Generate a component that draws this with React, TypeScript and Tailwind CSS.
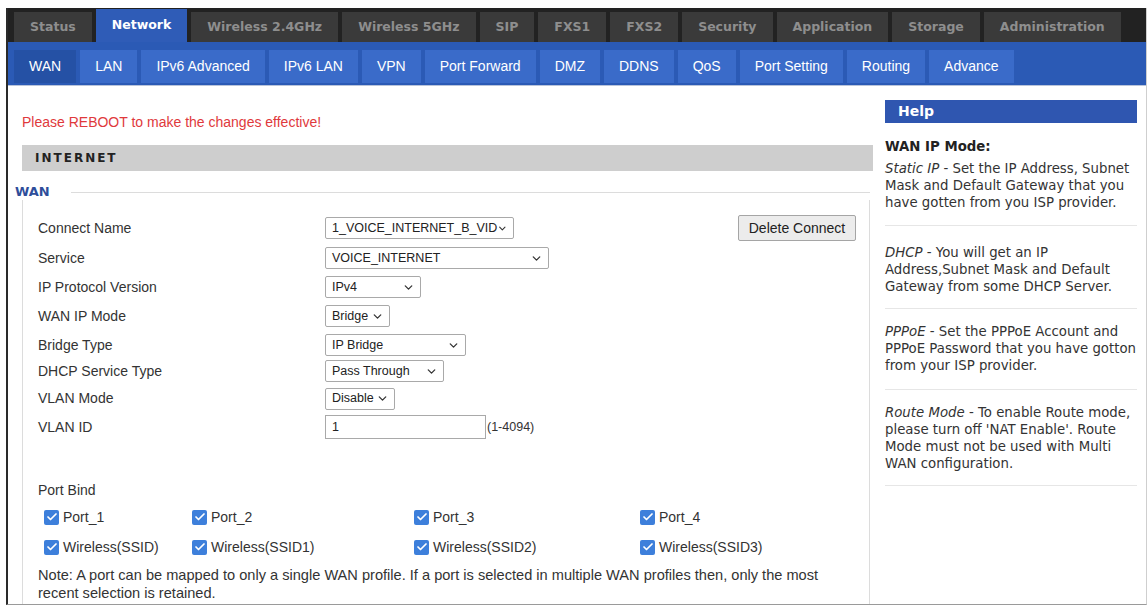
import { ChevronDown, Check } from 'lucide-react'

const topTabs = [
  'Status',
  'Network',
  'Wireless 2.4GHz',
  'Wireless 5GHz',
  'SIP',
  'FXS1',
  'FXS2',
  'Security',
  'Application',
  'Storage',
  'Administration',
]

const subTabs = [
  'WAN',
  'LAN',
  'IPv6 Advanced',
  'IPv6 LAN',
  'VPN',
  'Port Forward',
  'DMZ',
  'DDNS',
  'QoS',
  'Port Setting',
  'Routing',
  'Advance',
]

function Select({ value, className }: { value: string; className: string }) {
  return (
    <div
      className={`flex h-[22px] items-center justify-between rounded-[2px] border border-[#a9a9a9] bg-white pl-[6px] pr-[5px] text-[12.5px] text-[#222] ${className}`}
    >
      <span className="whitespace-nowrap">{value}</span>
      <ChevronDown size={13} strokeWidth={2.4} className="text-[#333]" />
    </div>
  )
}

function Checkbox({ label }: { label: string }) {
  return (
    <div className="flex items-center gap-[4px]">
      <span className="flex h-[15px] w-[15px] items-center justify-center rounded-[2px] bg-[#3d7fdb]">
        <Check size={12} strokeWidth={3.5} className="text-white" />
      </span>
      <span>{label}</span>
    </div>
  )
}

const rows = [
  { label: 'Connect Name', h: 'h-[30px]', field: <Select value="1_VOICE_INTERNET_B_VID" className="w-[189px]" /> },
  { label: 'Service', h: 'h-[30px]', field: <Select value="VOICE_INTERNET" className="w-[224px]" /> },
  { label: 'IP Protocol Version', h: 'h-[28px]', field: <Select value="IPv4" className="w-[96px]" /> },
  { label: 'WAN IP Mode', h: 'h-[30px]', field: <Select value="Bridge" className="w-[65px]" /> },
  { label: 'Bridge Type', h: 'h-[28px]', field: <Select value="IP Bridge" className="w-[141px]" /> },
  { label: 'DHCP Service Type', h: 'h-[24px]', field: <Select value="Pass Through" className="w-[119px]" /> },
  { label: 'VLAN Mode', h: 'h-[31px]', field: <Select value="Disable" className="w-[70px]" /> },
  {
    label: 'VLAN ID',
    h: 'h-[26px]',
    field: (
      <div className="flex items-center">
        <div className="flex h-[24px] w-[161px] items-center border border-[#a9a9a9] bg-white pl-[6px] text-[12.5px] text-[#222]">
          1
        </div>
        <span className="ml-[1px] text-[12.5px] text-[#333]">(1-4094)</span>
      </div>
    ),
  },
]

export default function App() {
  return (
    <div className="h-[607px] w-[1148px] bg-white pt-[8px] pl-[6px]">
      <div className="flex h-[597px] w-[1141px] flex-col border-l-2 border-r border-b border-l-[#2a2a2a] border-r-[#cfcfcf] border-b-[#9a9a9a]">
        {/* Top menu */}
        <div className="flex h-[34px] items-end gap-[4px] bg-[#222] pl-[6px] font-['DejaVu_Sans',sans-serif] text-[12.5px] font-bold">
          {topTabs.map((t) =>
            t === 'Network' ? (
              <div key={t} className="flex h-[33px] items-center bg-[#2f5cb7] px-[16px] text-white">
                {t}
              </div>
            ) : (
              <div key={t} className="flex h-[30px] items-center bg-[#3a3a3a] px-[16px] text-[#8e8e8e]">
                {t}
              </div>
            ),
          )}
        </div>

        {/* Sub menu */}
        <div className="flex h-[44px] items-end gap-[4px] border-b border-[#b9c4da] bg-[#2b5ab5] pb-[2px] pl-[6px] font-['Liberation_Sans',Arial,sans-serif] text-[14px] text-white">
          {subTabs.map((t) => (
            <div
              key={t}
              className={`flex h-[33px] items-center px-[15px] ${t === 'WAN' ? 'bg-[#2551a5]' : 'bg-[#3a6bc9]'}`}
            >
              {t}
            </div>
          ))}
        </div>

        <div className="flex flex-1 font-['Liberation_Sans',Arial,sans-serif] text-[#333]">
          {/* Main */}
          <div className="flex w-[865px] flex-col">
            <div className="ml-[14px] mt-[28px] h-[16px] text-[14px] leading-[16px] text-[#e0393c]">
              Please REBOOT to make the changes effective!
            </div>

            <div className="ml-[14px] mt-[15px] flex h-[26px] items-center bg-[#cecece] pl-[13px] font-['DejaVu_Sans',sans-serif] text-[12px] font-bold tracking-[2px] text-[#222]">
              INTERNET
            </div>

            <div className="ml-[7px] mr-[3px] mt-[13px] flex h-[16px] items-center">
              <span className="font-['DejaVu_Sans',sans-serif] text-[13px] font-bold text-[#2e4d9a]">WAN</span>
              <div className="ml-[21px] h-px flex-1 bg-[#dcdcdc]" />
            </div>

            <div className="ml-[14px] mr-[3px] flex flex-1 flex-col border-x border-[#dcdcdc] pl-[15px] text-[14px]">
              <div className="mt-[13px]">
                {rows.map((r, i) => (
                  <div key={r.label} className={`flex items-center ${r.h} ${i === 0 ? 'pr-[13px]' : ''}`}>
                    <div className="w-[287px]">{r.label}</div>
                    {r.field}
                    {i === 0 && (
                      <button className="ml-auto flex h-[26px] w-[118px] items-center justify-center rounded-[2px] border border-[#a5a5a5] bg-[#ececec] text-[14px] text-[#222]">
                        Delete Connect
                      </button>
                    )}
                  </div>
                ))}
              </div>

              <div className="mt-[41px] h-[18px] leading-[18px]">Port Bind</div>
              <div className="ml-[6px] mt-[3px] grid grid-cols-[148px_222px_226px_auto]">
                <div className="flex h-[30px] items-center"><Checkbox label="Port_1" /></div>
                <div className="flex h-[30px] items-center"><Checkbox label="Port_2" /></div>
                <div className="flex h-[30px] items-center"><Checkbox label="Port_3" /></div>
                <div className="flex h-[30px] items-center"><Checkbox label="Port_4" /></div>
                <div className="flex h-[30px] items-center"><Checkbox label="Wireless(SSID)" /></div>
                <div className="flex h-[30px] items-center"><Checkbox label="Wireless(SSID1)" /></div>
                <div className="flex h-[30px] items-center"><Checkbox label="Wireless(SSID2)" /></div>
                <div className="flex h-[30px] items-center"><Checkbox label="Wireless(SSID3)" /></div>
              </div>
              <div className="mt-[4px] whitespace-nowrap text-[14.6px] leading-[18px]">
                Note: A port can be mapped to only a single WAN profile. If a port is selected in multiple WAN profiles then, only the most
                <br />
                recent selection is retained.
              </div>
            </div>
          </div>

          {/* Help */}
          <div className="ml-[12px] mt-[14px] w-[252px] font-['DejaVu_Sans',sans-serif] text-[13.3px] leading-[17px] text-[#333]">
            <div className="flex h-[23px] items-center bg-[#2f56b0] pl-[13px] text-[14px] font-bold text-white">Help</div>
            <div className="whitespace-nowrap border-b border-[#e6e6e6] pb-[14px] pt-[14px]">
              <div className="font-bold leading-[20px] text-[#222]">WAN IP Mode:</div>
              <div className="mt-[3px]">
                <i>Static IP</i> - Set the IP Address, Subnet
                <br />
                Mask and Default Gateway that you
                <br />
                have gotten from you ISP provider.
              </div>
            </div>
            <div className="whitespace-nowrap border-b border-[#e6e6e6] pb-[13px] pt-[18px]">
              <i>DHCP</i> - You will get an IP
              <br />
              Address,Subnet Mask and Default
              <br />
              Gateway from some DHCP Server.
            </div>
            <div className="whitespace-nowrap border-b border-[#e6e6e6] pb-[15px] pt-[14px]">
              <i>PPPoE</i> - Set the PPPoE Account and
              <br />
              PPPoE Password that you have gotton
              <br />
              from your ISP provider.
            </div>
            <div className="whitespace-nowrap border-b border-[#e6e6e6] pb-[13px] pt-[14px]">
              <i>Route Mode</i> - To enable Route mode,
              <br />
              please turn off 'NAT Enable'. Route
              <br />
              Mode must not be used with Multi
              <br />
              WAN configuration.
            </div>
          </div>
        </div>
      </div>
    </div>
  )
}
